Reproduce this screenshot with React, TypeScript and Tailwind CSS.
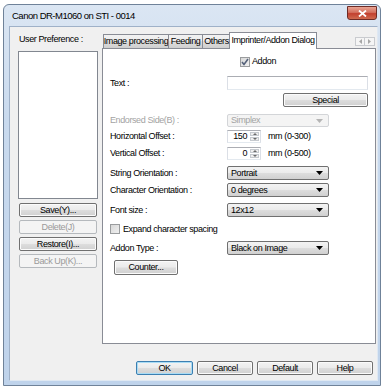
import React from "react";

const btnBg = "bg-[linear-gradient(#f3f3f3,#ebebeb_48%,#dddddd_52%,#d0d0d0)]";

function Btn({ label, disabled, def, className }: { label: string; disabled?: boolean; def?: boolean; className?: string }) {
  if (disabled) {
    return (
      <div className={`flex items-center justify-center rounded-[2px] border border-[#b5b9bd] bg-[#f4f4f4] text-[#9a9a9a] ${className ?? ""}`}>
        {label}
      </div>
    );
  }
  return (
    <div
      className={`flex items-center justify-center rounded-[2px] border ${def ? "border-[#3c7fb1] shadow-[inset_0_0_0_1px_#a9dcf5]" : "border-[#707070] shadow-[inset_0_0_0_1px_#fbfbfb]"} ${btnBg} ${className ?? ""}`}
    >
      {label}
    </div>
  );
}

function Arrow({ color = "#000" }: { color?: string }) {
  return (
    <svg width="7" height="4" viewBox="0 0 7 4" className="shrink-0">
      <polygon points="0,0 7,0 3.5,4" fill={color} />
    </svg>
  );
}

function Combo({ value, disabled }: { value: string; disabled?: boolean }) {
  return (
    <div
      className={`w-[102px] h-full flex items-center justify-between pl-[3px] pr-[5px] rounded-[2px] border ${
        disabled ? "border-[#d3d5d8] bg-[#f4f4f4] text-[#a3a3a3]" : `border-[#707070] ${btnBg}`
      }`}
    >
      <span>{value}</span>
      <Arrow color={disabled ? "#b5b5b5" : "#000"} />
    </div>
  );
}

function Spin({ value }: { value: string }) {
  return (
    <div className="w-[34px] h-full flex border border-[#abadb3] border-b-[#e3e9ef] border-x-[#dbdfe6] bg-white">
      <div className="flex-1 flex items-center justify-end pr-[2px]">{value}</div>
      <div className="w-[11px] flex flex-col gap-px p-px">
        <div className="flex-1 flex items-center justify-center border border-[#c6cacf] bg-[#eeeeee]">
          <svg width="4" height="2" viewBox="0 0 4 2"><polygon points="0,2 4,2 2,0" fill="#6b6b6b" /></svg>
        </div>
        <div className="flex-1 flex items-center justify-center border border-[#c6cacf] bg-[#eeeeee]">
          <svg width="4" height="2" viewBox="0 0 4 2"><polygon points="0,0 4,0 2,2" fill="#6b6b6b" /></svg>
        </div>
      </div>
    </div>
  );
}

function Check({ checked }: { checked?: boolean }) {
  return (
    <div className="w-[10px] h-[10px] border border-[#9a9c9e] bg-[linear-gradient(135deg,#d8d8d8,#f0f0f0)] flex items-center justify-center shrink-0">
      {checked && (
        <svg width="8" height="8" viewBox="0 0 8 8">
          <polyline points="1,4 3,6.5 7,1" fill="none" stroke="#55627a" strokeWidth="1.6" />
        </svg>
      )}
    </div>
  );
}

function Row({ label, mt, h, dim, children }: { label?: string; mt: string; h: string; dim?: boolean; children?: React.ReactNode }) {
  return (
    <div className={`flex items-center ${mt} ${h}`}>
      <div className={`w-[117px] shrink-0 ${dim ? "text-[#a3a3a3]" : ""}`}>{label}</div>
      {children}
    </div>
  );
}

const tabBg = "bg-[linear-gradient(#f2f2f2,#ebebeb_50%,#dddddd_50%,#cfcfcf)]";

export default function App() {
  return (
    <div className="w-[384px] h-[387px] bg-white overflow-hidden text-[9px] tracking-[-0.4px] leading-none whitespace-nowrap text-black font-['Liberation_Sans',Arial,sans-serif]">
      <div className="ml-[3px] mt-[4px] w-[378px] h-[382px] rounded-t-[6px] border border-[#6f8299] bg-[linear-gradient(#dbe6f3,#c9daee_30%,#bfd3eb)] flex flex-col">
        {/* title bar */}
        <div className="h-[21px] flex items-start">
          <div className="pl-[8px] pt-[6px] text-[9.5px] tracking-[-0.5px]">Canon DR-M1060 on STI - 0014</div>
          <div className="ml-auto mr-[3px] mt-[1px] w-[30px] h-[14px] rounded-b-[3px] border border-[#6e2b25] bg-[linear-gradient(#e8a493,#d4705e_45%,#c2402f_55%,#cf6a4f)] flex items-center justify-center">
            <svg width="9" height="7" viewBox="0 0 9 7">
              <path d="M1 0.5 L8 6.5 M8 0.5 L1 6.5" stroke="#fff" strokeWidth="1.8" />
            </svg>
          </div>
        </div>

        {/* client area */}
        <div className="ml-[5px] w-[369px] h-[355px] bg-[#f0f0f0] border border-[#9fb1c8] border-r-[#dfe8f2] border-b-[#dfe8f2] flex flex-col">
          <div className="flex">
            {/* left column */}
            <div className="w-[92px] shrink-0 flex flex-col">
              <div className="pl-[9px] pt-[8px] h-[24px]">User Preference :</div>
              <div className="ml-[8px] w-[80px] h-[148px] border border-[#828790] bg-white" />
              <div className="ml-[9px] mt-[4px] flex flex-col gap-[3px]">
                <Btn label="Save(Y)..." className="w-[78px] h-[14px]" />
                <Btn label="Delete(J)" disabled className="w-[78px] h-[14px]" />
                <Btn label="Restore(I)..." className="w-[78px] h-[14px]" />
                <Btn label="Back Up(K)..." disabled className="w-[78px] h-[14px]" />
              </div>
            </div>

            {/* tab control */}
            <div className="w-[274px] shrink-0 flex flex-col pt-[5px]">
              <div className="h-[16px] flex items-end relative z-10">
                <div className={`ml-[1px] w-[66px] h-[14px] border border-b-0 border-[#898c95] ${tabBg} flex items-center justify-center`}>Image processing</div>
                <div className={`-ml-px w-[35px] h-[14px] border border-b-0 border-[#898c95] ${tabBg} flex items-center justify-center`}>Feeding</div>
                <div className={`-ml-px w-[29px] h-[14px] border border-b-0 border-[#898c95] ${tabBg} flex items-center justify-center`}>Others</div>
                <div className="-ml-[2px] w-[88px] h-[17px] -mb-px border border-b-0 border-[#898c95] bg-white flex items-center justify-center pb-[2px]">Imprinter/Addon Dialog</div>
                <div className="ml-auto mr-[1px] mb-[2px] flex">
                  <div className="w-[10px] h-[9px] border border-[#c9cbcf] bg-[#f5f5f5] flex items-center justify-center">
                    <svg width="3" height="5" viewBox="0 0 3 5"><polygon points="3,0 3,5 0,2.5" fill="#a6a6a6" /></svg>
                  </div>
                  <div className="w-[10px] h-[9px] border border-l-0 border-[#c9cbcf] bg-[#f5f5f5] flex items-center justify-center">
                    <svg width="3" height="5" viewBox="0 0 3 5"><polygon points="0,0 0,5 3,2.5" fill="#a6a6a6" /></svg>
                  </div>
                </div>
              </div>
              <div className="h-[296px] border border-[#898c95] bg-white pl-[7px] flex flex-col">
                <Row mt="mt-[7px]" h="h-[11px]">
                  <div className="ml-[13px] flex items-center gap-[2px]">
                    <Check checked />
                    <span>Addon</span>
                  </div>
                </Row>
                <Row label="Text :" mt="mt-[9px]" h="h-[14px]">
                  <div className="w-[141px] h-full border border-[#abadb3] border-b-[#e3e9ef] border-x-[#dbdfe6] bg-white" />
                </Row>
                <Row mt="mt-[3px]" h="h-[14px]">
                  <Btn label="Special" className="ml-[56px] w-[85px] h-full" />
                </Row>
                <Row label="Endorsed Side(B) :" dim mt="mt-[7px]" h="h-[13px]">
                  <Combo value="Simplex" disabled />
                </Row>
                <Row label="Horizontal Offset :" mt="mt-[3px]" h="h-[13px]">
                  <Spin value="150" />
                  <span className="ml-[7px]">mm (0-300)</span>
                </Row>
                <Row label="Vertical Offset :" mt="mt-[4px]" h="h-[13px]">
                  <Spin value="0" />
                  <span className="ml-[7px]">mm (0-500)</span>
                </Row>
                <Row label="String Orientation :" mt="mt-[6px]" h="h-[14px]">
                  <Combo value="Portrait" />
                </Row>
                <Row label="Character Orientation :" mt="mt-[3px]" h="h-[14px]">
                  <Combo value="0 degrees" />
                </Row>
                <Row label="Font size :" mt="mt-[6px]" h="h-[14px]">
                  <Combo value="12x12" />
                </Row>
                <div className="mt-[6px] h-[12px] flex items-center gap-[3px]">
                  <Check />
                  <span>Expand character spacing</span>
                </div>
                <Row label="Addon Type :" mt="mt-[6px]" h="h-[14px]">
                  <Combo value="Black on Image" />
                </Row>
                <div className="mt-[5px] h-[15px] flex">
                  <Btn label="Counter..." className="ml-[4px] w-[64px] h-full" />
                </div>
              </div>
            </div>
          </div>

          {/* bottom buttons */}
          <div className="mt-[17px] flex justify-end gap-[4px] pr-[4px]">
            <Btn label="OK" def className="w-[57px] h-[14px]" />
            <Btn label="Cancel" className="w-[56px] h-[14px]" />
            <Btn label="Default" className="w-[56px] h-[14px]" />
            <Btn label="Help" className="w-[56px] h-[14px]" />
          </div>
        </div>
      </div>
    </div>
  );
}
